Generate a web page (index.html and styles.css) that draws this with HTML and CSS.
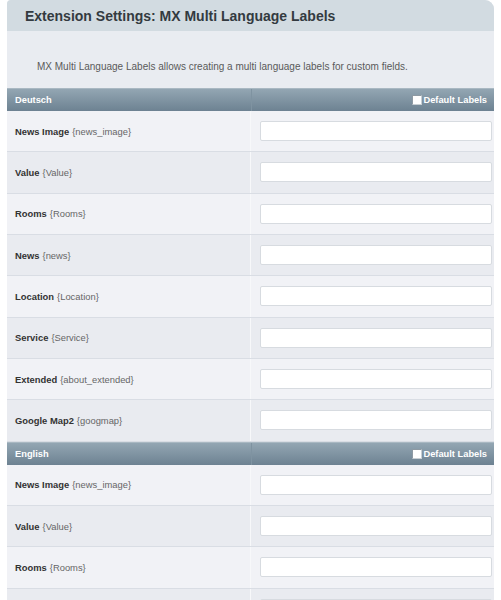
FILE: index.html
```html
<!DOCTYPE html>
<html>
<head>
<meta charset="utf-8">
<link rel="stylesheet" href="styles.css">
</head>
<body>
<div class="panel">
  <div class="title">Extension Settings: MX Multi Language Labels</div>
  <div class="desc">MX Multi Language Labels allows creating a multi language labels for custom fields.</div>

  <div class="group">
    <div class="head"><span class="lang">Deutsch</span><label class="def"><span class="box"></span>Default Labels</label></div>
    <div class="row"><div class="lbl"><b>News Image</b> {news_image}</div><div class="fld"><input type="text"></div></div>
    <div class="row"><div class="lbl"><b>Value</b> {Value}</div><div class="fld"><input type="text"></div></div>
    <div class="row"><div class="lbl"><b>Rooms</b> {Rooms}</div><div class="fld"><input type="text"></div></div>
    <div class="row"><div class="lbl"><b>News</b> {news}</div><div class="fld"><input type="text"></div></div>
    <div class="row"><div class="lbl"><b>Location</b> {Location}</div><div class="fld"><input type="text"></div></div>
    <div class="row"><div class="lbl"><b>Service</b> {Service}</div><div class="fld"><input type="text"></div></div>
    <div class="row"><div class="lbl"><b>Extended</b> {about_extended}</div><div class="fld"><input type="text"></div></div>
    <div class="row"><div class="lbl"><b>Google Map2</b> {googmap}</div><div class="fld"><input type="text"></div></div>
  </div>

  <div class="group">
    <div class="head"><span class="lang">English</span><label class="def"><span class="box"></span>Default Labels</label></div>
    <div class="row"><div class="lbl"><b>News Image</b> {news_image}</div><div class="fld"><input type="text"></div></div>
    <div class="row"><div class="lbl"><b>Value</b> {Value}</div><div class="fld"><input type="text"></div></div>
    <div class="row"><div class="lbl"><b>Rooms</b> {Rooms}</div><div class="fld"><input type="text"></div></div>
    <div class="row"><div class="lbl"><b>News</b> {news}</div><div class="fld"><input type="text"></div></div>
  </div>
</div>
</body>
</html>
```
FILE: styles.css
```css
html, body { margin: 0; padding: 0; background: #ffffff; }
body { font-family: "Liberation Sans", Arial, sans-serif; color: #333; }
.panel {
  margin-left: 7px;
  width: 487px;
  background: #e9ecf1;
  border-radius: 4px 9px 0 0;
  overflow: hidden;
}
.title {
  height: 31px;
  box-sizing: border-box;
  background: #d2dbe1;
  font-size: 14px;
  font-weight: bold;
  color: #333a40;
  padding: 8px 0 0 18px;
  line-height: 17px;
}
.desc {
  height: 57px;
  box-sizing: border-box;
  padding: 30px 0 0 30px;
  font-size: 10px;
  line-height: 12px;
  color: #5a5a5a;
  background: #e9ecf1;
}
.head {
  height: 23px;
  box-sizing: border-box;
  background: linear-gradient(#93a6b3, #6d8292);
  border-top: 1px solid #a9b8c2;
  display: flex;
  align-items: center;
  justify-content: space-between;
  padding: 0 7px 0 8px;
  color: #fff;
  font-size: 9.3px;
  font-weight: bold;
  position: relative;
}
.head::after {
  content: "";
  position: absolute;
  left: 244px;
  top: 0;
  bottom: 0;
  width: 1px;
  background: #7f93a1;
}
.def { display: flex; align-items: center; gap: 1px; }
.box {
  width: 10px; height: 10px;
  box-sizing: border-box;
  background: #fff;
  border: 1px solid #8e9aa3;
  border-right-color: #c8cfd4;
  border-bottom-color: #c8cfd4;
  display: inline-block;
}
.row {
  display: grid;
  grid-template-columns: 244px 1fr;
  height: 41.33px;
  box-sizing: border-box;
  border-bottom: 1px solid #d9dde4;
  background: #f1f2f6;
}
.row:nth-of-type(odd) { background: #e9ebf0; }
.lbl {
  display: flex;
  align-items: center;
  padding-left: 8px;
  font-size: 9.4px;
  color: #666;
  border-right: 1px solid #f7f8fa;
}
.lbl b { color: #333; margin-right: 3px; }
.fld {
  display: flex;
  align-items: center;
  padding-left: 9px;
}
.fld input {
  width: 232px;
  height: 20px;
  box-sizing: border-box;
  border: 1px solid #d7dbe0;
  border-radius: 2px;
  background: #fff;
  margin: 0;
  padding: 0;
}
```
